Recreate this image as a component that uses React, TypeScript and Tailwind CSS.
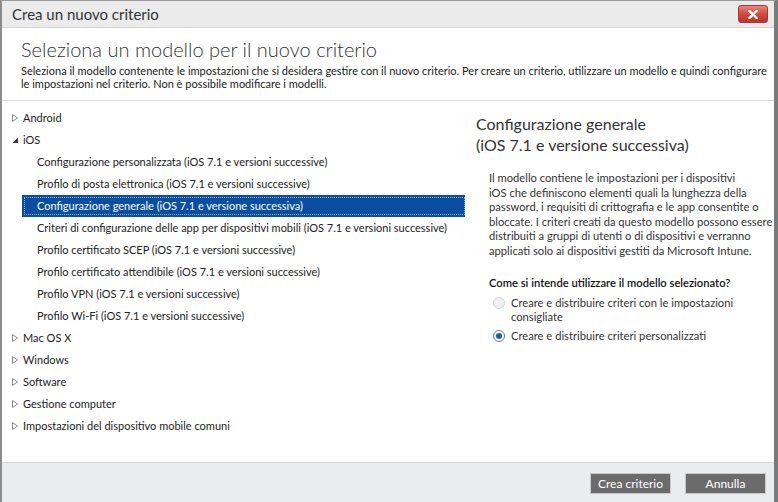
import { useState } from "react";

const font = { fontFamily: "Lato, 'Open Sans', sans-serif" };

function Collapsed() {
  return (
    <svg width="6" height="8" viewBox="0 0 6 8" className="shrink-0">
      <path d="M0.5 0.5 L5.5 4 L0.5 7.5 Z" fill="none" stroke="#8a8a8a" strokeWidth="1" />
    </svg>
  );
}

function Expanded() {
  return (
    <svg width="6" height="8" viewBox="0 0 6 8" className="shrink-0">
      <path d="M6 1.5 L6 7 L0.5 7 Z" fill="#333" />
    </svg>
  );
}

function CloseButton() {
  return (
    <div className="w-[30px] h-[18px] rounded-[3px] border border-[#a83a33] bg-gradient-to-b from-[#e5847b] via-[#cf4b40] to-[#b8352c] flex items-center justify-center">
      <svg width="10" height="9" viewBox="0 0 10 9">
        <path d="M1.5 1 L8.5 8 M8.5 1 L1.5 8" stroke="white" strokeWidth="2.4" strokeLinecap="square" />
      </svg>
    </div>
  );
}

const platforms = ["Mac OS X", "Windows", "Software", "Gestione computer", "Impostazioni del dispositivo mobile comuni"];

const iosItems = [
  "Configurazione personalizzata (iOS 7.1 e versioni successive)",
  "Profilo di posta elettronica (iOS 7.1 e versioni successive)",
  "Configurazione generale (iOS 7.1 e versione successiva)",
  "Criteri di configurazione delle app per dispositivi mobili (iOS 7.1 e versioni successive)",
  "Profilo certificato SCEP (iOS 7.1 e versioni successive)",
  "Profilo certificato attendibile (iOS 7.1 e versioni successive)",
  "Profilo VPN (iOS 7.1 e versioni successive)",
  "Profilo Wi-Fi (iOS 7.1 e versioni successive)",
];

const descLines = [
  "Il modello contiene le impostazioni per i dispositivi",
  "iOS che definiscono elementi quali la lunghezza della",
  "password, i requisiti di crittografia e le app consentite o",
  "bloccate. I criteri creati da questo modello possono essere",
  "distribuiti a gruppi di utenti o di dispositivi e verranno",
  "applicati solo ai dispositivi gestiti da Microsoft Intune.",
];

function Radio({ checked }: { checked: boolean }) {
  return (
    <span
      className={
        "mt-[1px] w-[12px] h-[12px] rounded-full border shrink-0 flex items-center justify-center " +
        (checked ? "border-[#5a7fa6] bg-white" : "border-[#d4d4d4] bg-[#f0f0f0]")
      }
    >
      {checked && <span className="w-[6px] h-[6px] rounded-full bg-[#1c5fb0]" />}
    </span>
  );
}

export default function App() {
  const [selected, setSelected] = useState(2);
  const [mode, setMode] = useState(1);

  return (
    <div
      className="w-[778px] h-[502px] flex flex-col bg-white border-t border-t-[#9a9a9a] border-l-2 border-l-[#8c8c8c] border-r-4 border-r-[#7a7a7a] text-[#222] overflow-hidden"
      style={font}
    >
      {/* title bar */}
      <div className="h-[27px] shrink-0 bg-[#ebebeb] border-b border-[#d6d6d6] flex items-center justify-between pl-[10px] pr-[6px]">
        <span className="text-[15px] text-[#333]">Crea un nuovo criterio</span>
        <CloseButton />
      </div>

      {/* header */}
      <div className="h-[73px] shrink-0 border-b border-[#dcdcdc] pl-[19px] pr-[4px] pt-[8px]">
        <div className="text-[20px] font-light text-[#333] leading-[26px]">
          Seleziona un modello per il nuovo criterio
        </div>
        <div className="text-[11px] leading-[12.5px] mt-[3px] text-[#222]">
          Seleziona il modello contenente le impostazioni che si desidera gestire con il nuovo criterio. Per creare un criterio, utilizzare un modello e quindi configurare le impostazioni nel criterio. Non è possibile modificare i modelli.
        </div>
      </div>

      {/* body */}
      <div className="flex-1 flex min-h-0">
        <div className="w-[468px] shrink-0 pt-[6px] text-[11px] whitespace-nowrap">
          <div className="h-[22px] flex items-center gap-[5px] pl-[10px]">
            <Collapsed />
            <span>Android</span>
          </div>
          <div className="h-[22px] flex items-center gap-[5px] pl-[10px]">
            <Expanded />
            <span>iOS</span>
          </div>
          {iosItems.map((item, i) => (
            <div
              key={item}
              onClick={() => setSelected(i)}
              className={
                "h-[22px] ml-[20px] mr-[5px] pl-[2px] flex items-center " +
                (selected === i ? "bg-[#0a4ea0] text-white" : "")
              }
            >
              <span
                className={
                  "flex-1 h-[18px] flex items-center pl-[12px] border border-dotted " +
                  (selected === i ? "border-[#8fb2dc]" : "border-transparent")
                }
              >
                {item}
              </span>
            </div>
          ))}
          {platforms.map((p) => (
            <div key={p} className="h-[22px] flex items-center gap-[5px] pl-[10px]">
              <Collapsed />
              <span>{p}</span>
            </div>
          ))}
        </div>

        <div className="flex-1 pl-[6px] pt-[12px] whitespace-nowrap">
          <div className="text-[16px] leading-[21px] text-[#333]">
            Configurazione generale
            <br />
            (iOS 7.1 e versione successiva)
          </div>
          <div className="pl-[13px] mt-[16px] text-[11.2px] leading-[14.5px] text-[#333]">
            <p>
              {descLines.map((l) => (
                <span key={l} className="block">
                  {l}
                </span>
              ))}
            </p>
            <p className="mt-[18px] font-semibold text-[#111]">Come si intende utilizzare il modello selezionato?</p>
            <div className="mt-[5px] flex flex-col gap-[4px] pl-[4px]">
              <label className="flex gap-[6px] cursor-pointer" onClick={() => setMode(0)}>
                <Radio checked={mode === 0} />
                <span>
                  Creare e distribuire criteri con le impostazioni
                  <br />
                  consigliate
                </span>
              </label>
              <label className="flex gap-[6px] cursor-pointer" onClick={() => setMode(1)}>
                <Radio checked={mode === 1} />
                <span>Creare e distribuire criteri personalizzati</span>
              </label>
            </div>
          </div>
        </div>
      </div>

      {/* footer */}
      <div className="h-[40px] shrink-0 bg-[#ebeced] border-t border-[#d8d8d8] flex items-start justify-end gap-[14px] pt-[10px] pr-[8px]">
        <button className="w-[81px] h-[21px] bg-[#6b6b6b] border border-[#c8c8c8] text-white text-[12px]">
          Crea criterio
        </button>
        <button className="w-[81px] h-[21px] bg-[#6b6b6b] border border-[#c8c8c8] text-white text-[12px]">
          Annulla
        </button>
      </div>
    </div>
  );
}
